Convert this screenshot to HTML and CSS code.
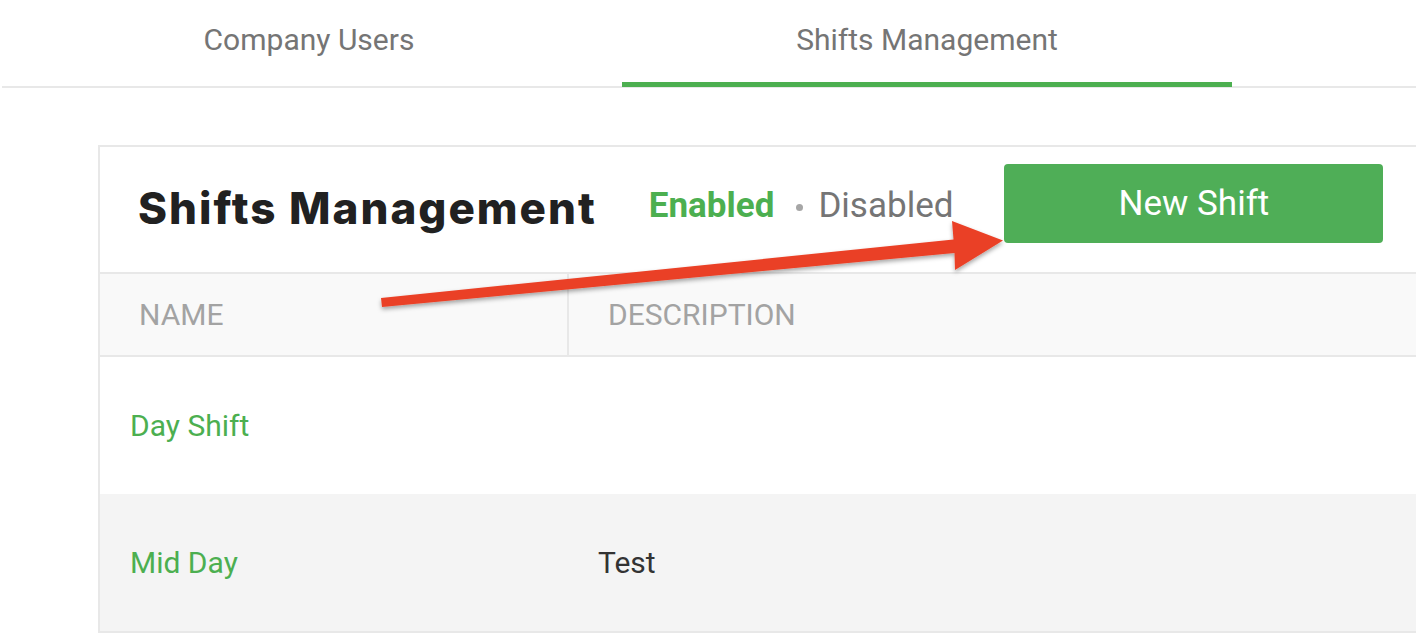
FILE: index.html
```html
<!DOCTYPE html>
<html lang="en">
<head>
<meta charset="utf-8">
<title>Shifts Management</title>
<link rel="stylesheet" href="styles.css">
</head>
<body>
<nav class="tabs">
  <div class="tab">Company Users</div>
  <div class="tab tab-active">Shifts Management</div>
</nav>

<section class="card">
  <header class="card-header">
    <h1 class="title">Shifts Management</h1>
    <div class="filter">
      <span class="filter-on">Enabled</span>
      <span class="filter-dot"></span>
      <span class="filter-off">Disabled</span>
    </div>
    <button class="btn-new">New Shift</button>
  </header>
  <div class="row row-head">
    <div class="cell cell-head cell-first">NAME</div>
    <div class="cell cell-head">DESCRIPTION</div>
  </div>
  <div class="row">
    <div class="cell cell-name">Day Shift</div>
    <div class="cell cell-desc"></div>
  </div>
  <div class="row row-alt">
    <div class="cell cell-name">Mid Day</div>
    <div class="cell cell-desc">Test</div>
  </div>
</section>

<svg class="annotation" width="1416" height="644" viewBox="0 0 1416 644" xmlns="http://www.w3.org/2000/svg">
  <defs>
    <filter id="shadow" x="-5%" y="-50%" width="110%" height="200%">
      <feDropShadow dx="0" dy="2.5" stdDeviation="2" flood-color="#000" flood-opacity="0.35"/>
    </filter>
  </defs>
  <polygon filter="url(#shadow)" fill="#ea4127"
    points="381,298 953.5,239.5 952,221 1003,240.5 955,270 954.5,253 382,307"/>
</svg>
</body>
</html>
```

FILE: styles.css
```css
* { box-sizing: border-box; }

html, body {
  margin: 0;
  padding: 0;
  background: #ffffff;
  overflow: hidden;
  width: 1416px;
  height: 644px;
  font-family: Roboto, "Liberation Sans", Arial, sans-serif;
}

.tabs {
  display: flex;
  gap: 8px;
  margin-left: 2px;
  height: 88px;
  border-bottom: 2px solid #e8e8e8;
  padding-left: 2px;
}

.tab {
  width: 610px;
  height: 86px;
  padding-top: 22px;
  text-align: center;
  font-size: 30px;
  line-height: 35px;
  color: #757575;
}

.tab-active {
  height: 87px;
  border-bottom: 5px solid #4caf50;
}

.card {
  margin-top: 57px;
  margin-left: 98px;
  width: 1360px;
  border: 2px solid #e8e8e8;
  background: #ffffff;
}

.card-header {
  display: flex;
  align-items: flex-start;
  height: 125px;
  padding-top: 17px;
  padding-left: 38px;
}

.title {
  margin: 23px 0 0 0;
  font-family: Inter, "Open Sans", sans-serif;
  font-weight: 800;
  font-size: 44px;
  line-height: 43px;
  color: #212121;
  letter-spacing: 2px;
  white-space: nowrap;
}

.filter {
  display: flex;
  align-items: center;
  margin-left: 52px;
  margin-top: 24px;
  height: 35px;
  font-size: 35px;
  line-height: 35px;
  white-space: nowrap;
}

.filter-on {
  color: #4caf50;
  font-weight: 700;
}

.filter-dot {
  width: 7px;
  height: 7px;
  border-radius: 50%;
  background: #a6a6a6;
  margin: 4px 15px 0 22px;
}

.filter-off {
  color: #757575;
}

.btn-new {
  margin-left: 51px;
  width: 379px;
  height: 79px;
  border: none;
  border-radius: 4px;
  background: #4fae57;
  color: #ffffff;
  font-family: Roboto, "Liberation Sans", sans-serif;
  font-size: 35px;
  padding: 0;
}

.row {
  display: grid;
  grid-template-columns: 469px 1fr;
  height: 137px;
}

.row-head {
  height: 85px;
  background: #f9f9f9;
  border-top: 2px solid #e8e8e8;
  border-bottom: 2px solid #e8e8e8;
}

.row-alt {
  background: #f4f4f4;
}

.cell {
  display: flex;
  align-items: center;
  padding-left: 30px;
  font-size: 30px;
  color: #333333;
}

.cell-head {
  padding-left: 39px;
  color: #a3a3a3;
}

.cell-first {
  border-right: 2px solid #e8e8e8;
}

.cell-name {
  color: #4caf50;
}

.cell-desc {
  padding-left: 29px;
}

.annotation {
  position: absolute;
  top: 0;
  left: 0;
  pointer-events: none;
}
```
